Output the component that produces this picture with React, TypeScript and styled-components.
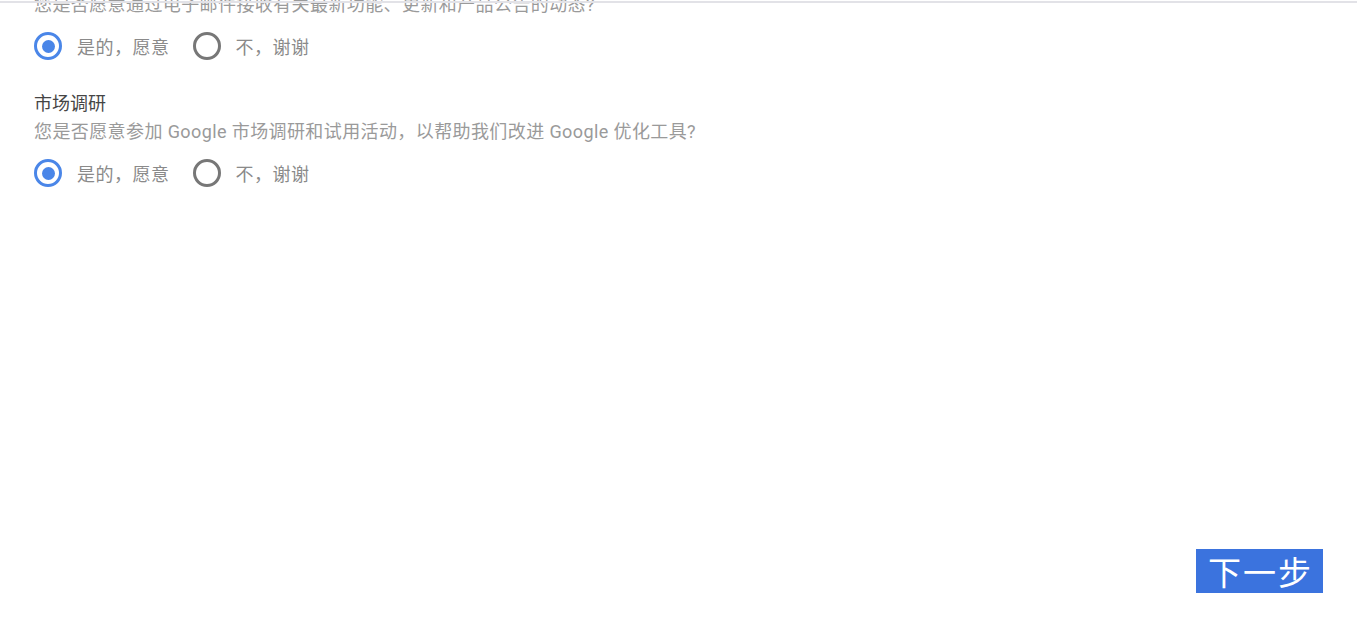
import styled, { createGlobalStyle } from "styled-components";
import { useState } from "react";

const GlobalStyle = createGlobalStyle`
    html, body {
        margin: 0;
        padding: 0;
        background: #ffffff;
        overflow: hidden;
    }

    body {
        font-family: Roboto, "Noto Sans CJK SC", sans-serif;
    }
`

const Page = styled.div`
    position: relative;
    display: flex;
    flex-direction: column;
    justify-content: space-between;
    height: 628px;
    box-sizing: border-box;
    padding: 0 37px 35px 34px;
`

const TopLine = styled.div`
    position: absolute;
    top: 1px;
    left: 0;
    right: 3px;
    height: 2px;
    background: #e2e2e7;
`

const Content = styled.div`
    display: flex;
    flex-direction: column;
    gap: 30px;
    margin-top: -9px;
`

const Section = styled.div`
    display: flex;
    flex-direction: column;
`

const Title = styled.div`
    font-size: 18px;
    line-height: 28px;
    color: #454545;
`

const Desc = styled.div`
    font-size: 18px;
    line-height: 28px;
    letter-spacing: 0.4px;
    color: #9a9a9a;
    margin-bottom: 13px;
`

const RadioRow = styled.div`
    display: flex;
    align-items: center;
    height: 28px;
    gap: 23px;
`

const Option = styled.label`
    display: flex;
    align-items: center;
    gap: 15px;
    cursor: pointer;
    font-size: 18px;
    letter-spacing: 0.5px;
    color: #8a8a8a;
`

const Circle = styled.span<{ $checked: boolean }>`
    display: flex;
    align-items: center;
    justify-content: center;
    width: 28px;
    height: 28px;
    box-sizing: border-box;
    border-radius: 50%;
    border: 3px solid ${p => (p.$checked ? "#4a86e8" : "#777777")};

    &::after {
        content: "";
        width: 13px;
        height: 13px;
        border-radius: 50%;
        background: #4a86e8;
        display: ${p => (p.$checked ? "block" : "none")};
    }
`

const Footer = styled.div`
    display: flex;
    justify-content: flex-end;
`

const NextButton = styled.button`
    width: 127px;
    height: 44px;
    border: none;
    border-radius: 0;
    background: #3b73de;
    color: #ffffff;
    font-family: "Noto Sans CJK SC", sans-serif;
    font-size: 33px;
    line-height: 44px;
    letter-spacing: 2px;
    padding: 0 0 0 2px;
    cursor: pointer;
`

type Question = {
    id: string;
    title?: string;
    desc: string;
}

const questions: Question[] = [
    { id: "email", desc: "您是否愿意通过电子邮件接收有关最新功能、更新和产品公告的动态?" },
    { id: "research", title: "市场调研", desc: "您是否愿意参加 Google 市场调研和试用活动，以帮助我们改进 Google 优化工具?" },
]

export default function App() {
    const [answers, setAnswers] = useState<Record<string, boolean>>({ email: true, research: true })

    return (
        <>
            <GlobalStyle />
            <Page>
                <TopLine />
                <Content>
                    {questions.map(q => (
                        <Section key={q.id}>
                            {q.title && <Title>{q.title}</Title>}
                            <Desc>{q.desc}</Desc>
                            <RadioRow>
                                <Option onClick={() => setAnswers({ ...answers, [q.id]: true })}>
                                    <Circle $checked={answers[q.id]} />
                                    是的，愿意
                                </Option>
                                <Option onClick={() => setAnswers({ ...answers, [q.id]: false })}>
                                    <Circle $checked={!answers[q.id]} />
                                    不，谢谢
                                </Option>
                            </RadioRow>
                        </Section>
                    ))}
                </Content>
                <Footer>
                    <NextButton>下一步</NextButton>
                </Footer>
            </Page>
        </>
    )
}
